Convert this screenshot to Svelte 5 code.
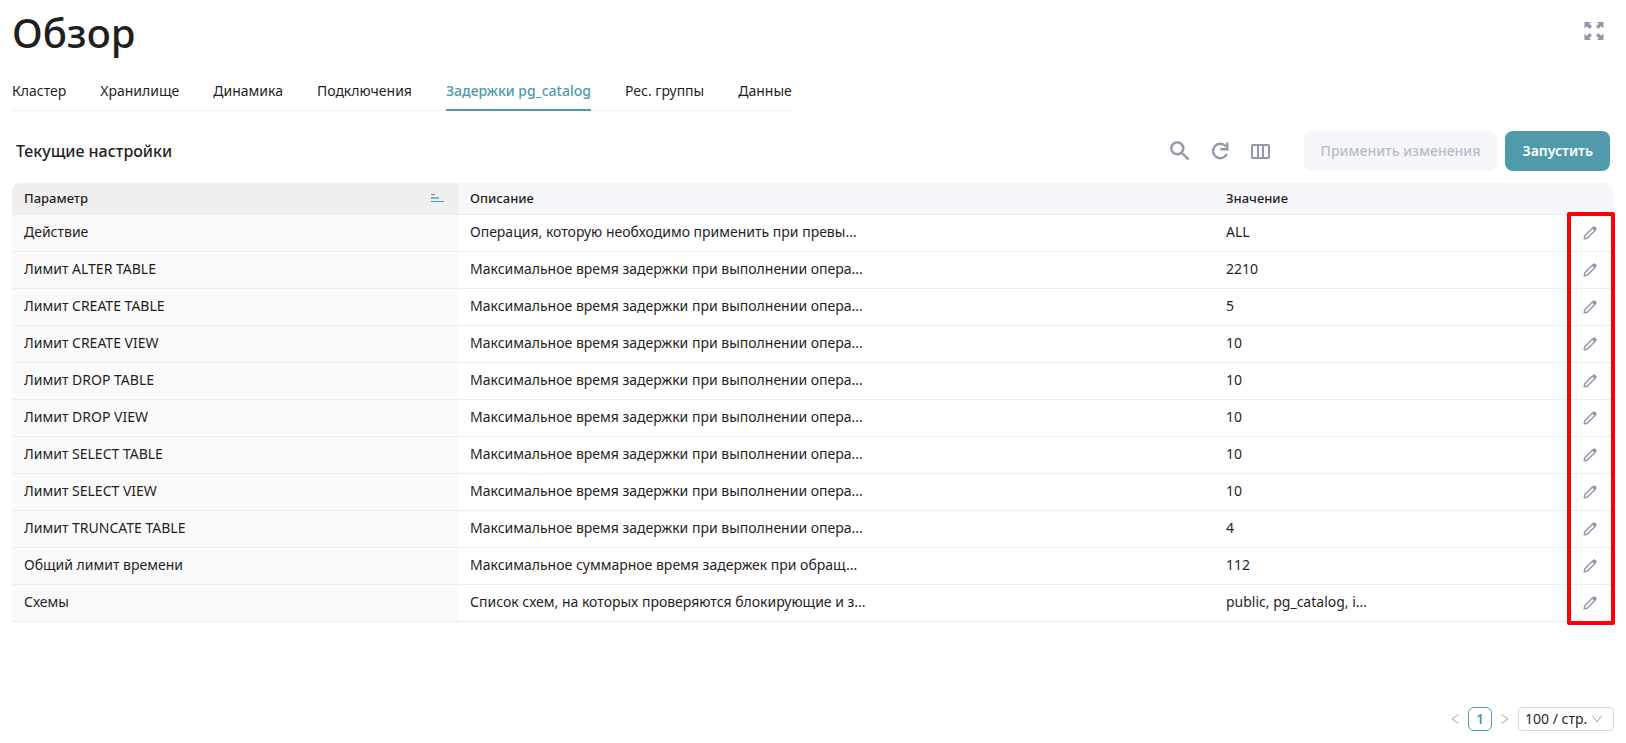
<script>
  const tabs = [
    'Кластер',
    'Хранилище',
    'Динамика',
    'Подключения',
    'Задержки pg_catalog',
    'Рес. группы',
    'Данные'
  ];
  let activeTab = 'Задержки pg_catalog';

  const delay = 'Максимальное время задержки при выполнении опера...';

  const settings = [
    { name: 'Действие', description: 'Операция, которую необходимо применить при превы...', value: 'ALL' },
    { name: 'Лимит ALTER TABLE', description: delay, value: '2210' },
    { name: 'Лимит CREATE TABLE', description: delay, value: '5' },
    { name: 'Лимит CREATE VIEW', description: delay, value: '10' },
    { name: 'Лимит DROP TABLE', description: delay, value: '10' },
    { name: 'Лимит DROP VIEW', description: delay, value: '10' },
    { name: 'Лимит SELECT TABLE', description: delay, value: '10' },
    { name: 'Лимит SELECT VIEW', description: delay, value: '10' },
    { name: 'Лимит TRUNCATE TABLE', description: delay, value: '4' },
    { name: 'Общий лимит времени', description: 'Максимальное суммарное время задержек при обращ...', value: '112' },
    { name: 'Схемы', description: 'Список схем, на которых проверяются блокирующие и з...', value: 'public, pg_catalog, i...' }
  ];
</script>

<main class="page">
  <header class="header">
    <h1>Обзор</h1>
    <button class="icon-button" aria-label="Во весь экран">
      <svg width="20" height="20" viewBox="0 0 20 20" fill="currentColor">
        <path d="M0.500 1h6.500L5.200 2.800 8 5.600 5.600 8 2.800 5.200 0.500 7.500z" />
        <path d="M19.500 1H13l1.800 1.800L12 5.600 14.400 8l2.800-2.800 2.300 2.300z" />
        <path d="M0.500 19h6.500l-1.800-1.800L8 14.400 5.600 12l-2.800 2.800L0.500 12.500z" />
        <path d="M19.500 19H13l1.800-1.800-2.800-2.800 2.400-2.400 2.800 2.800 2.300-2.300z" />
      </svg>
    </button>
  </header>

  <nav class="tabs">
    {#each tabs as tab}
      <button class="tab" class:active={tab === activeTab} on:click={() => (activeTab = tab)}>{tab}</button>
    {/each}
  </nav>

  <section class="toolbar">
    <h2>Текущие настройки</h2>
    <div class="tools">
      <button class="icon-button" aria-label="Поиск">
        <svg width="26" height="26" viewBox="0 0 24 24" fill="currentColor" stroke="currentColor" stroke-width="0.3">
          <path d="M15.500 14h-.79l-.28-.27A6.470 6.470 0 0 0 16 9.500 6.500 6.500 0 1 0 9.500 16c1.610 0 3.090-.59 4.230-1.570l.27.28v.79l5 4.990L20.490 19l-4.990-5zm-6 0C7.010 14 5 11.990 5 9.500S7.010 5 9.500 5 14 7.010 14 9.500 11.990 14 9.500 14z" />
        </svg>
      </button>
      <button class="icon-button" aria-label="Обновить">
        <svg width="24" height="24" viewBox="0 0 24 24" fill="none" stroke="currentColor" stroke-width="2.4">
          <path d="M18.800 15A7.200 7.200 0 1 1 17.800 7.400" />
          <path d="M19.300 3.500v6.700h-7" />
        </svg>
      </button>
      <button class="icon-button" aria-label="Колонки">
        <svg width="24" height="24" viewBox="0 0 24 24" fill="none" stroke="currentColor" stroke-width="2">
          <rect x="4" y="6" width="17" height="13" rx="1" />
          <path d="M10 6v13M15 6v13" />
        </svg>
      </button>
    </div>
    <button class="button" disabled>Применить изменения</button>
    <button class="button primary">Запустить</button>
  </section>

  <div class="table-wrap">
    <table>
      <colgroup>
        <col class="col-name" />
        <col />
        <col class="col-value" />
        <col class="col-edit" />
      </colgroup>
      <thead>
        <tr>
          <th class="sorted">
            <div class="sort-head">
              Параметр
              <svg width="14" height="10" viewBox="0 0 14 10" fill="currentColor">
                <rect x="1" y="1" width="4" height="1" />
                <rect x="1" y="4" width="8" height="2" opacity="0.7" />
                <rect x="1" y="8" width="13" height="1" />
              </svg>
            </div>
          </th>
          <th>Описание</th>
          <th>Значение</th>
          <th></th>
        </tr>
      </thead>
      <tbody>
        {#each settings as row}
          <tr>
            <td class="sorted">{row.name}</td>
            <td>{row.description}</td>
            <td>{row.value}</td>
            <td class="edit-cell">
              <button class="edit" aria-label="Изменить">
                <svg width="16" height="16" viewBox="0 0 16 16" fill="none" stroke="currentColor">
                  <path d="M2.200 13.800l.5-3 7.800-7.800 2.500 2.500-7.800 7.800z" stroke-width="1.400" stroke-linejoin="round" />
                  <path d="M10.300 3.200l1-1a1.400 1.400 0 0 1 2 0l.5.5a1.400 1.400 0 0 1 0 2l-1 1z" fill="currentColor" />
                </svg>
              </button>
            </td>
          </tr>
        {/each}
      </tbody>
    </table>
    <div class="highlight"></div>
  </div>

  <footer class="pagination">
    <button class="arrow" aria-label="Назад">
      <svg width="12" height="12" viewBox="0 0 12 12" fill="none" stroke="currentColor"><path d="M9.500 1.500L3 6l6.500 4.500" /></svg>
    </button>
    <button class="current">1</button>
    <button class="arrow" aria-label="Вперёд">
      <svg width="12" height="12" viewBox="0 0 12 12" fill="none" stroke="currentColor"><path d="M2.500 1.500L9 6l-6.500 4.500" /></svg>
    </button>
    <label class="size">
      <select aria-label="Строк на странице">
        <option>100 / стр.</option>
      </select>
      <svg width="12" height="12" viewBox="0 0 12 12" fill="none" stroke="currentColor"><path d="M1.500 2.500L6 9l4.500-6.500" /></svg>
    </label>
  </footer>
</main>

<style>
  :global(body) {
    margin: 0;
    background: #fff;
  }

  .page {
    box-sizing: border-box;
    display: flex;
    flex-direction: column;
    min-height: 100vh;
    padding: 11px 12px 12px;
    font-family: 'Noto Sans', 'Open Sans', sans-serif;
    font-size: 14px;
    line-height: 20px;
    color: #1f1f1f;
  }

  button {
    padding: 0;
    border: 0;
    background: none;
    font: inherit;
    color: inherit;
    cursor: pointer;
  }

  svg {
    display: block;
  }

  .header {
    display: flex;
    align-items: flex-start;
    justify-content: space-between;
  }

  h1 {
    margin: 0;
    font-size: 40px;
    font-weight: 500;
    line-height: 44px;
  }

  .icon-button {
    display: flex;
    align-items: center;
    justify-content: center;
    width: 40px;
    height: 40px;
    color: #9297ac;
  }

  .tabs {
    display: flex;
    align-self: flex-start;
    gap: 34px;
    margin-top: 16px;
    box-shadow: inset 0 -1px #f0f0f0;
  }

  .tab {
    height: 40px;
    padding-top: 2px;
    border-bottom: 2px solid transparent;
  }

  .tab.active {
    border-color: #4f9bab;
    color: #4f9bab;
    font-weight: 500;
  }

  .toolbar {
    display: flex;
    align-items: center;
    gap: 8px;
    margin-top: 20px;
    padding: 0 4px;
  }

  h2 {
    flex: 1;
    margin: 0;
    font-size: 16px;
    font-weight: 500;
  }

  .tools {
    display: flex;
    margin-right: 16px;
  }

  .button {
    height: 40px;
    padding: 0 17px;
    border-radius: 8px;
    background: #f5f6f9;
    color: #b9bdcb;
    font-weight: 500;
  }

  .button.primary {
    background: #4f9bab;
    color: #fff;
    font-weight: 600;
  }

  .table-wrap {
    position: relative;
    margin-top: 12px;
  }

  table {
    width: 100%;
    border-spacing: 0;
    table-layout: fixed;
  }

  .col-name {
    width: 446px;
  }

  .col-value {
    width: 352px;
  }

  .col-edit {
    width: 48px;
  }

  th,
  td {
    box-sizing: border-box;
    padding: 0 12px;
    border-bottom: 1px solid #ebedf5;
    text-align: left;
    white-space: nowrap;
    overflow: hidden;
  }

  th {
    height: 32px;
    padding-bottom: 2px;
    background: #f7f8fc;
    font-size: 13px;
    font-weight: 500;
  }

  th:first-child {
    border-top-left-radius: 8px;
  }

  th:last-child {
    border-top-right-radius: 8px;
  }

  td {
    height: 37px;
    padding-bottom: 2px;
  }

  th.sorted {
    background: #efefef;
  }

  td.sorted {
    background: #fafafa;
  }

  .sort-head {
    display: flex;
    align-items: center;
    justify-content: space-between;
    padding-right: 2px;
  }

  .sort-head svg {
    color: #4f9bab;
  }

  .edit-cell {
    padding: 0;
  }

  .edit {
    display: flex;
    align-items: center;
    justify-content: center;
    width: 100%;
    height: 24px;
    color: #9297ac;
  }

  /* frame round the edit column */
  .highlight {
    position: absolute;
    top: 29px;
    right: -1px;
    bottom: -3px;
    box-sizing: border-box;
    width: 48px;
    border: 4px solid #f00;
    border-radius: 2px;
    pointer-events: none;
  }

  .pagination {
    display: flex;
    align-items: center;
    justify-content: flex-end;
    margin-top: auto;
  }

  .arrow {
    display: flex;
    align-items: center;
    justify-content: center;
    width: 26px;
    height: 24px;
    color: #a8a8a8;
  }

  .current {
    box-sizing: border-box;
    width: 24px;
    height: 24px;
    border: 1px solid #4f9bab;
    border-radius: 6px;
    color: #4f9bab;
    font-weight: 600;
  }

  .size {
    position: relative;
  }

  select {
    display: block;
    box-sizing: border-box;
    width: 96px;
    height: 24px;
    padding: 0 6px;
    border: 1px solid #d9d9d9;
    border-radius: 4px;
    background: #fff;
    font: inherit;
    color: inherit;
    appearance: none;
  }

  .size svg {
    position: absolute;
    top: 6px;
    right: 11px;
    color: #a8a8a8;
    pointer-events: none;
  }
</style>
